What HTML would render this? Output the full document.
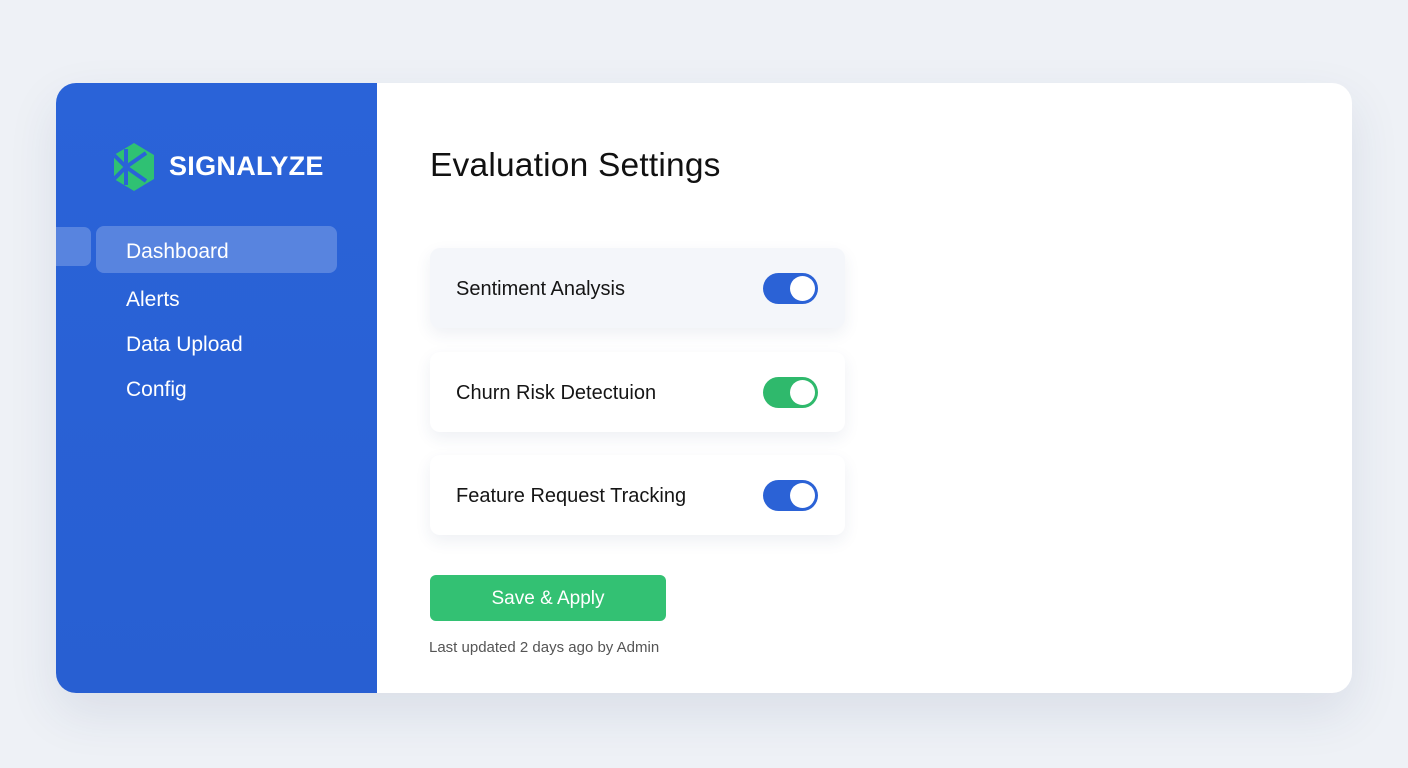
<!DOCTYPE html>
<html><head><style>
*{margin:0;padding:0;box-sizing:border-box}
body{width:1408px;height:768px;background:#eef1f6;font-family:"Liberation Sans",sans-serif;position:relative;overflow:hidden}
.card{position:absolute;left:56px;top:83px;width:1296px;height:610px;background:#fff;border-radius:20px;overflow:hidden;box-shadow:0 20px 50px rgba(40,60,110,.10)}
.side{position:absolute;left:0;top:0;width:321px;height:610px;background:linear-gradient(180deg,#2a63d8,#285fd2)}
.logo{position:absolute;left:112px;top:143px}
.brand{position:absolute;left:169px;top:151px;color:#fff;font-size:27px;font-weight:bold;letter-spacing:.3px}
.nav{position:absolute;color:#fff;font-size:21px;left:126px}
.active{position:absolute;left:96px;top:226px;width:241px;height:47px;border-radius:8px;background:rgba(255,255,255,.22)}
.tab{position:absolute;left:56px;top:227px;width:35px;height:39px;border-radius:0 7px 7px 0;background:rgba(255,255,255,.22)}
h1{position:absolute;left:430px;top:147px;font-size:33.5px;font-weight:normal;color:#111;letter-spacing:.2px}
.row{position:absolute;left:430px;width:415px;height:80px;border-radius:10px;background:#fff;box-shadow:0 6px 16px rgba(40,60,110,.08)}
.row span{position:absolute;left:26px;top:30px;font-size:20px;color:#151515}
.tg{position:absolute;left:333px;top:25px;width:55px;height:31px;border-radius:16px}
.tg:after{content:"";position:absolute;right:3px;top:3px;width:25px;height:25px;border-radius:50%;background:#fff}
.btn{position:absolute;left:430px;top:575px;width:236px;height:46px;border-radius:6px;background:#33c173;color:#fff;font-size:19px;text-align:center;line-height:48px}
.foot{position:absolute;left:429px;top:639px;font-size:15px;color:#555}
</style></head><body>
<div class="card"><div class="side"></div></div>
<div class="tab"></div><div class="active"></div>
<svg class="logo" width="44" height="48" viewBox="0 0 44 48">
<polygon points="22,0 42,12 42,36 22,48 2,36 2,12" fill="#2fc173"/>
<path d="M14,6 L14,42 M14,24 L34,10 M14,24 L34,38 M2,12 L14,24 L2,36" stroke="#2a63d8" stroke-width="4" fill="none"/>
</svg>
<div class="brand">SIGNALYZE</div>
<div class="nav" style="top:240px">Dashboard</div>
<div class="nav" style="top:288px">Alerts</div>
<div class="nav" style="top:333px">Data Upload</div>
<div class="nav" style="top:378px">Config</div>
<h1>Evaluation Settings</h1>
<div class="row" style="top:248px;background:#f4f6fa"><span>Sentiment Analysis</span><div class="tg" style="background:#2b62d6"></div></div>
<div class="row" style="top:352px"><span>Churn Risk Detectuion</span><div class="tg" style="background:#2fb96c"></div></div>
<div class="row" style="top:455px"><span>Feature Request Tracking</span><div class="tg" style="background:#2b62d6"></div></div>
<div class="btn">Save &amp; Apply</div>
<div class="foot">Last updated 2 days ago by Admin</div>
</body></html>
